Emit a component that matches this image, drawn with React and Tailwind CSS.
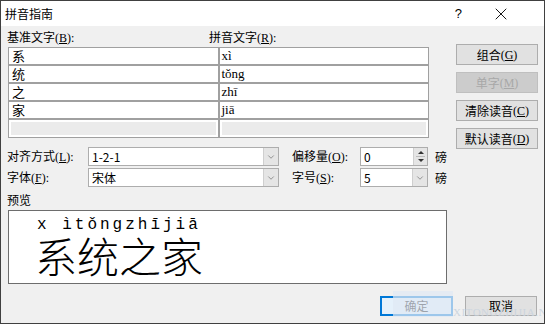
import { X, ChevronDown } from "lucide-react";

const ui = "font-['Noto_Sans_CJK_SC',sans-serif]";
const serif = "font-['Liberation_Serif','Noto_Sans_CJK_SC',serif]";

const rows = [
  { han: "系", py: "xì" },
  { han: "统", py: "tǒng" },
  { han: "之", py: "zhī" },
  { han: "家", py: "jiā" },
];

function Key({ k, colon = true }) {
  return (
    <span className={serif}>
      (<span className="underline underline-offset-1">{k}</span>){colon ? ":" : ""}
    </span>
  );
}

function Combo({ value, w }) {
  return (
    <div className={`${w} h-[19px] bg-white border border-[#adadad] flex`}>
      <span className="flex-1 pl-[3px] leading-[17px]">{value}</span>
      <span className="w-[15px] bg-[#e5e5e5] border-l border-[#cfcfcf] flex items-center justify-center">
        <ChevronDown size={10} strokeWidth={1.5} color="#606060" />
      </span>
    </div>
  );
}

function Btn({ children, disabled }) {
  return (
    <div
      className={`w-[82px] h-[21px] border flex items-center justify-center leading-none ${
        disabled
          ? "bg-[#cccccc] border-[#bfbfbf] text-[#a8a8a8]"
          : "bg-[#e1e1e1] border-[#adadad]"
      }`}
    >
      {children}
    </div>
  );
}

export default function App() {
  return (
    <div
      className={`relative w-[545px] h-[324px] border border-[#404040] flex flex-col overflow-hidden text-[12px] text-black ${ui}`}
    >
      {/* TITLE */}
      <div className="h-[25px] bg-white flex items-center pl-[4px] shrink-0">
        <span className="text-[12px]">拼音指南</span>
        <span className="ml-auto mr-[29px] text-[13px] font-['Liberation_Sans',sans-serif]">?</span>
        <X size={20} strokeWidth={1.1} className="mr-[33px]" />
      </div>

      {/* BODY */}
      <div className="flex-1 bg-[#f0f0f0] flex flex-col pl-[6px]">
        <div className="flex">
          <div className="w-[440px] flex flex-col">
            <div className="mt-[3px] h-[16px] flex items-center">
              <span className="w-[202px]">
                基准文字<Key k="B" />
              </span>
              <span>
                拼音文字<Key k="R" />
              </span>
            </div>

            {/* grid */}
            <div className="mt-[2px] ml-[1px] w-[421px] bg-[#a0a0a0] p-[1px] grid grid-cols-2 gap-[2px]">
              {rows.map((r, i) => [
                <div key={"h" + i} className="h-[16px] bg-white pl-[3px] leading-[16px] text-[13px]">
                  {r.han}
                </div>,
                <div key={"p" + i} className={`h-[16px] bg-white pl-[2px] leading-[16px] text-[13px] ${serif}`}>
                  {r.py}
                </div>,
              ])}
              <div className="h-[17px] bg-[#ebebeb] border-2 border-white" />
              <div className="h-[17px] bg-[#ebebeb] border-2 border-white" />
            </div>

            {/* form rows */}
            <div className="mt-[9px] flex flex-col gap-[2px]">
              <div className="flex items-center">
                <span className="w-[81px]">
                  对齐方式<Key k="L" />
                </span>
                <Combo value="1-2-1" w="w-[191px]" />
                <span className="ml-[13px] w-[68px]">
                  偏移量<Key k="O" />
                </span>
                <div className="w-[68px] h-[19px] bg-white border border-[#adadad] flex">
                  <span className="flex-1 pl-[3px] leading-[17px]">0</span>
                  <span className="w-[14px] bg-[#e5e5e5] border-l border-[#cfcfcf] flex flex-col items-center justify-center gap-[2px]">
                    <span className="w-0 h-0 border-x-[3px] border-x-transparent border-b-[3px] border-b-[#333]" />
                    <span className="w-[9px] h-px bg-[#bbb]" />
                    <span className="w-0 h-0 border-x-[3px] border-x-transparent border-t-[3px] border-t-[#333]" />
                  </span>
                </div>
                <span className="ml-[7px]">磅</span>
              </div>
              <div className="flex items-center">
                <span className="w-[81px]">
                  字体<Key k="F" />
                </span>
                <Combo value="宋体" w="w-[191px]" />
                <span className="ml-[13px] w-[68px]">
                  字号<Key k="S" />
                </span>
                <Combo value="5" w="w-[68px]" />
                <span className="ml-[7px]">磅</span>
              </div>
            </div>

            <div className="mt-[5px] h-[16px] leading-[16px]">预览</div>

            {/* preview */}
            <div className="mt-[2px] ml-[1px] w-[439px] h-[74px] bg-white border border-[#6d6d6d] pl-[28px] pt-[6px] flex flex-col">
              <div className="text-[16px] leading-[16px] tracking-[3px] font-['Liberation_Mono',monospace] whitespace-pre">
                x ìtǒngzhījiā
              </div>
              <div className="-ml-[2px] text-[42px] leading-[44px] font-light">系统之家</div>
            </div>
          </div>

          {/* right buttons */}
          <div className="ml-[9px] pt-[18px] flex flex-col gap-[7px]">
            <Btn>
              组合<Key k="G" colon={false} />
            </Btn>
            <Btn disabled>
              单字<Key k="M" colon={false} />
            </Btn>
            <Btn>
              清除读音<Key k="C" colon={false} />
            </Btn>
            <Btn>
              默认读音<Key k="D" colon={false} />
            </Btn>
          </div>
        </div>

        {/* bottom buttons */}
        <div className="mt-auto mb-[7px] mr-[7px] flex justify-end gap-[12px]">
          <div className="w-[73px] h-[20px] bg-[#e5f1fb] border-2 border-[#0078d7] flex items-center justify-center">
            确定
          </div>
          <div className="w-[72px] h-[20px] bg-[#e1e1e1] border border-[#adadad] flex items-center justify-center">
            取消
          </div>
        </div>
      </div>

      {/* watermark */}
      <div className="absolute left-[392px] top-[290px] w-[60px] h-[26px] bg-[#dfe8f3]/70" />
      <div className={`absolute left-[452px] top-[303px] text-[11px] tracking-[0.5px] text-[#c9d3de]/90 ${serif}`}>
        XITONGZHIJIA.NET
      </div>
    </div>
  );
}
